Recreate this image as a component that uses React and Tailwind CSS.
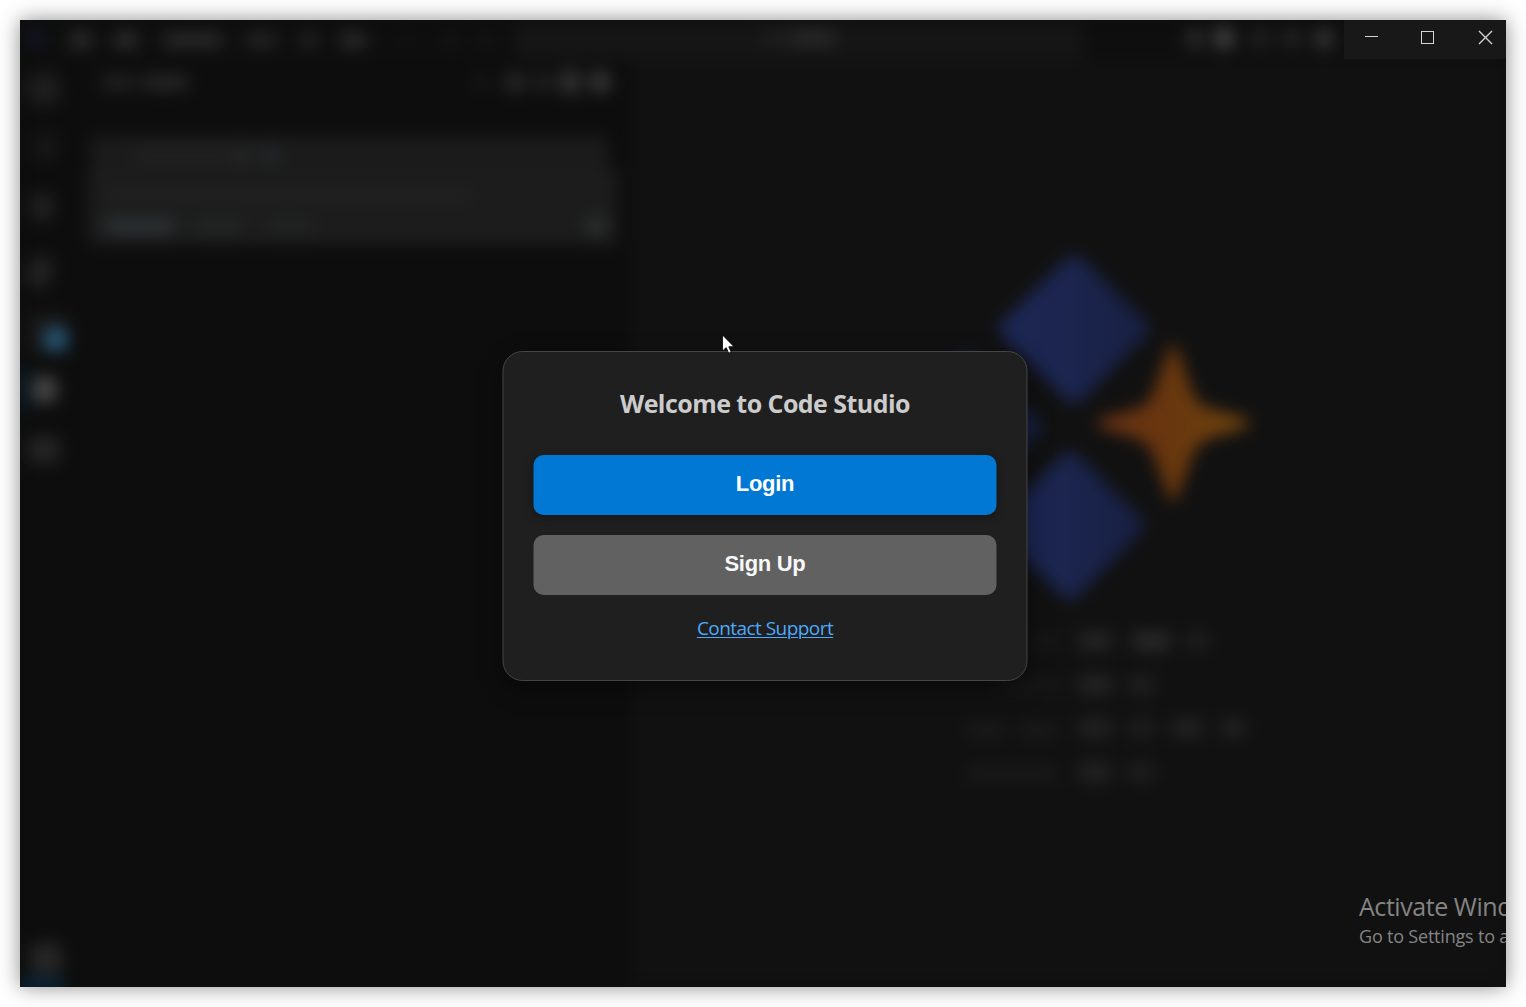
import React from "react";

function Bar({ className }) {
  return <span className={`block shrink-0 rounded-lg ${className}`} />;
}

function TitleBar() {
  return (
    <div className="flex h-[40px] shrink-0 items-center bg-[#0d0e0d]">
      <Bar className="ml-2 mb-1 h-5 w-4 bg-[#15152b]" />
      <Bar className="ml-[25px] h-[18px] w-6 bg-[#2a2a2a]" />
      <Bar className="ml-5 h-[18px] w-[26px] bg-[#2a2a2a]" />
      <Bar className="ml-[23px] h-[16px] w-[62px] bg-[#282828]" />
      <Bar className="ml-5 h-[16px] w-[34px] bg-[#232323]" />
      <Bar className="ml-5 h-[16px] w-[22px] bg-[#212121]" />
      <Bar className="ml-[18px] h-[16px] w-[30px] bg-[#292929]" />
      <Bar className="ml-[32px] h-2 w-3 bg-[#141414]" />
      <Bar className="ml-8 h-3.5 w-3 bg-[#181818]" />
      <Bar className="ml-6 h-3.5 w-3 bg-[#181818]" />
      <div className="ml-[23px] flex h-full w-[568px] items-center justify-center bg-[#141514] pb-1">
        <Bar className="h-3 w-7 bg-[#202020]" />
        <Bar className="h-4 w-[48px] bg-[#282828]" />
      </div>
      <Bar className="ml-[102px] mb-1 h-[19px] w-5 bg-[#2b2b2b]" />
      <Bar className="ml-[9px] mb-1 h-[22px] w-5 bg-[#404040]" />
      <Bar className="ml-3.5 mb-1 h-5 w-6 bg-[#1f1f1f]" />
      <Bar className="ml-2 mb-1 h-5 w-6 bg-[#202020]" />
      <Bar className="ml-2.5 mb-1 h-[21px] w-[20px] bg-[#323232]" />
    </div>
  );
}

function ActivityBar() {
  return (
    <div className="flex w-[56px] shrink-0 flex-col pl-2">
      <Bar className="mt-[13px] h-8 w-8 -rotate-12 bg-[#1e1e1e]" />
      <Bar className="mt-7 ml-1.5 h-7 w-6 bg-[#171717]" />
      <Bar className="mt-8 ml-0.5 h-7 w-6 bg-[#202020]" />
      <Bar className="mt-[35px] h-8 w-6 rotate-[25deg] bg-[#222222]" />
      <div className="mt-[25px] flex h-10 w-10 items-end justify-end bg-[#181818]">
        <Bar className="mb-0.5 h-[24px] w-[24px] bg-[#265473]" />
      </div>
      <div className="-ml-2 mt-[13px] flex items-center">
        <span className="h-[46px] w-1 bg-[#063052]" />
        <Bar className="ml-2 h-[27px] w-[25px] bg-[#444444]" />
      </div>
      <Bar className="mt-6 h-7 w-8 bg-[#242424]" />
      <Bar className="mt-auto mb-1.5 ml-0.5 h-8 w-8 bg-[#262626]" />
      <span className="-ml-2 h-1.5 w-11 shrink-0 bg-[#053e6c]" />
    </div>
  );
}

function ChatPanel() {
  return (
    <div className="flex w-[556px] shrink-0 flex-col">
      <div className="mt-4 flex h-3 items-center pl-6">
        <Bar className="h-[15px] w-[37px] bg-[#212121]" />
        <Bar className="ml-1 h-[17px] w-[49px] bg-[#242424]" />
        <Bar className="ml-[284px] h-4 w-3.5 bg-[#191919]" />
        <Bar className="ml-[15px] h-[21px] w-6 bg-[#242424]" />
        <Bar className="ml-1.5 h-[19px] w-5 bg-[#202020]" />
        <Bar className="ml-1.5 h-[26px] w-[22px] bg-[#2e2e2e]" />
        <Bar className="ml-2 h-[22px] w-[22px] bg-[#343434]" />
      </div>
      <div className="mt-[48px] ml-[14px] flex h-[32px] w-[518px] items-center rounded bg-[#1b1b1b] pl-[42px]">
        <Bar className="mt-1.5 h-4 w-[100px] bg-[#202020]" />
        <Bar className="mt-1.5 h-4 w-5 bg-[#262727]" />
        <Bar className="mt-1.5 ml-2 h-4 w-5 bg-[#25292b]" />
      </div>
      <div className="ml-[12px] h-[77px] w-[530px] rounded bg-[#1c1c1c] px-4 pt-5">
        <Bar className="h-3.5 w-[370px] bg-[#202020]" />
        <div className="mt-3.5 flex h-5 items-center">
          <Bar className="h-4 w-[72px] bg-[#2c3133]" />
          <Bar className="ml-4 h-4 w-[52px] bg-[#222424]" />
          <Bar className="ml-5 h-4 w-[52px] bg-[#212222]" />
          <Bar className="ml-[270px] h-5 w-5 bg-[#2a302f]" />
        </div>
      </div>
    </div>
  );
}

function StudioLogo() {
  return (
    <svg className="ml-[258px] mt-[185px] h-[370px] w-[370px] shrink-0 overflow-visible" viewBox="0 0 370 370">
      <defs>
        <linearGradient id="diamondFill" x1="0" x2="1">
          <stop offset="0" stopColor="#1c2654" />
          <stop offset="0.45" stopColor="#1b254e" />
          <stop offset="1" stopColor="#182043" />
        </linearGradient>
        <linearGradient id="sparkFill" x1="0" x2="1">
          <stop offset="0" stopColor="#673013" />
          <stop offset="0.5" stopColor="#68370e" />
          <stop offset="1" stopColor="#71450e" />
        </linearGradient>
      </defs>
      <g fill="url(#diamondFill)" stroke="url(#diamondFill)" strokeWidth="20" strokeLinejoin="round">
        <path d="M184 20L249 84L184 149L119 84Z" />
        <path d="M76 119L141 182L76 249L11 182Z" />
        <path d="M180 217L244 280L180 345L115 280Z" />
      </g>
      <path
        d="M283 99C287 99 295 129 305 153Q311 161 321 164C345 170 360 174 360 178S342 187 321 193Q311 196 305 205C295 229 287 257 283 257S271 229 261 205Q255 196 245 193C224 187 206 182 206 178S224 170 245 164Q255 161 261 153C271 129 279 99 283 99Z"
        fill="url(#sparkFill)"
      />
    </svg>
  );
}

function Editor() {
  return (
    <div className="flex flex-1 flex-col bg-[#111111]">
      <StudioLogo />
      <div className="ml-[334px] mt-[16px] flex flex-col gap-[23.5px]">
        <div className="flex h-5 items-center">
          <Bar className="ml-[65px] h-3 w-7 bg-[#191919]" />
          <Bar className="ml-[18px] h-5 w-9 bg-[#232323]" />
          <Bar className="ml-[18px] h-5 w-10 bg-[#272727]" />
          <Bar className="ml-3.5 h-5 w-6 bg-[#1e1e1e]" />
        </div>
        <div className="flex h-5 items-center">
          <Bar className="ml-[30px] h-3 w-[66px] bg-[#181818]" />
          <Bar className="ml-[15px] h-5 w-9 bg-[#232323]" />
          <Bar className="ml-3.5 h-5 w-7 bg-[#1f1f1f]" />
        </div>
        <div className="flex h-5 items-center">
          <Bar className="mt-1 h-3 w-10 bg-[#1c1c1c]" />
          <Bar className="ml-3 mt-1 h-3 w-10 bg-[#1c1c1c]" />
          <Bar className="ml-[19px] h-5 w-9 bg-[#212121]" />
          <Bar className="ml-3.5 h-5 w-7 bg-[#1d1d1d]" />
          <Bar className="ml-4 h-5 w-8 bg-[#222222]" />
          <Bar className="ml-4 h-5 w-7 bg-[#202020]" />
        </div>
        <div className="flex h-5 items-center">
          <Bar className="mt-1 h-3 w-[92px] bg-[#1b1b1b]" />
          <Bar className="ml-[19px] h-5 w-9 bg-[#212121]" />
          <Bar className="ml-3.5 h-5 w-7 bg-[#1e1e1e]" />
        </div>
      </div>
    </div>
  );
}

function WindowControls() {
  return (
    <div className="absolute top-0 right-0 h-[39px] w-[162px] bg-[#181818] text-[#d4d4d4]">
      <svg className="h-[39px] w-[162px]" viewBox="0 0 162 39" fill="none" stroke="currentColor" shapeRendering="crispEdges">
        <path d="M21 16.5H34" />
        <path d="M77.5 11.5H89.5V23.5H77.5Z" />
        <path d="M135 11L148 24M148 11L135 24" strokeWidth="1.4" shapeRendering="auto" />
      </svg>
    </div>
  );
}

function WelcomeDialog() {
  return (
    <div className="flex h-[330px] w-[525px] translate-x-[0.5px] translate-y-[12px] flex-col items-center rounded-[20px] border border-[#454545] bg-[#1f1f1f] px-[30px] font-['Open_Sans','Noto_Sans',sans-serif] shadow-[0_8px_24px_rgba(0,0,0,0.4)]">
      <h1 className="mt-[34px] h-[34px] whitespace-nowrap text-[25px] font-bold leading-[34px] tracking-[-0.55px] text-[#cccccc]">
        Welcome to Code Studio
      </h1>
      <button className="mt-[35px] h-[60px] w-full rounded-[10px] bg-[#0078d4] pb-[3px] font-['Liberation_Sans',sans-serif] text-[22px] font-bold tracking-[-0.3px] text-white shadow-[0_2px_8px_rgba(0,0,0,0.35)]">
        Login
      </button>
      <button className="mt-[20px] h-[60px] w-full rounded-[10px] bg-[#616161] pb-[3px] font-['Liberation_Sans',sans-serif] text-[22px] font-bold tracking-[-0.3px] text-[#f8f8f8]">
        Sign Up
      </button>
      <a className="mt-[20px] whitespace-nowrap text-[19px] leading-[26px] tracking-[-0.55px] text-[#4daafc] underline decoration-1 underline-offset-2">
        Contact Support
      </a>
    </div>
  );
}

export default function App() {
  return (
    <div className="h-[1007px] w-[1526px] overflow-hidden bg-white p-5">
      <div className="relative h-[967px] w-[1486px] shadow-[0_0_20px_rgba(0,0,0,0.45)]">
        <div className="relative h-full w-full overflow-hidden bg-[#0e0f0e]">
          <div className="flex h-full w-full flex-col blur-[8px]">
            <TitleBar />
            <div className="flex min-h-0 flex-1 bg-[#0d0d0d]">
              <ActivityBar />
              <ChatPanel />
              <Editor />
            </div>
          </div>
          <div className="absolute inset-0 flex items-center justify-center pl-[3px]">
            <WelcomeDialog />
          </div>
          <WindowControls />
          <div className="absolute left-[1339px] top-[870px] whitespace-nowrap font-['Open_Sans','Noto_Sans',sans-serif] text-[#848484]">
            <p className="text-[25px] leading-8 tracking-[-0.45px]">Activate Windows</p>
            <p className="mt-px text-[18px] leading-[27px] tracking-[-0.2px]">Go to Settings to activate Windows.</p>
          </div>
          <svg className="absolute left-[702px] top-[314px] h-[20px] w-[13px]" viewBox="0 0 13 20">
            <path d="M.5 1V17L4.2 13.6L6.7 19.2L9.2 18.1L6.8 12.7H12Z" fill="#fff" stroke="#000" strokeWidth=".8" />
          </svg>
        </div>
      </div>
    </div>
  );
}
